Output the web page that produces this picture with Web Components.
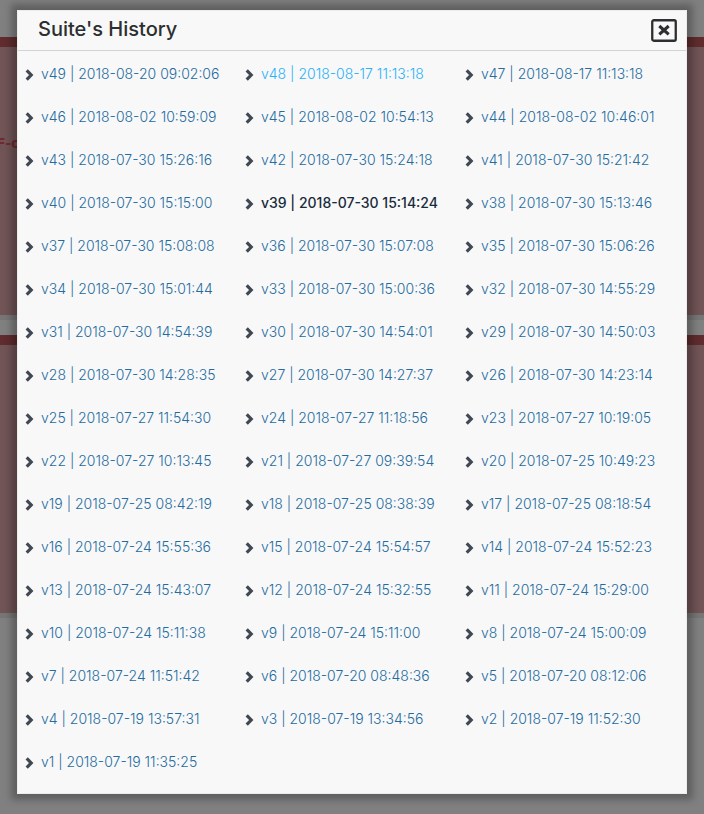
<!DOCTYPE html>
<html lang="en">
<head>
<meta charset="utf-8">
<title>Suite's History</title>
<style>
html { height: 100%; }
body { margin: 0; min-height: 100%; background: #808080; font-family: Inter, "Liberation Sans", sans-serif; }
</style>
</head>
<body>
<history-page></history-page>
<script>
class BackdropPanel extends HTMLElement {
  constructor() {
    super();
    this.attachShadow({ mode: 'open' }).innerHTML = `
      <style>
        :host { display: block; box-sizing: border-box; height: 283px; background: #705456;
          border-top: 10px solid #602c2e; border-bottom: 5px solid #767676; color: #6e2a2e;
          font: bold 14px/20px "DejaVu Sans", sans-serif; padding-top: 86px; text-indent: -4px; overflow: hidden; }
      </style><slot></slot>`;
  }
}
customElements.define('backdrop-panel', BackdropPanel);

class CloseButton extends HTMLElement {
  constructor() {
    super();
    this.attachShadow({ mode: 'open' }).innerHTML = `
      <style>
        :host { display: block; }
        button { display: block; padding: 0; border: 0; background: none; cursor: pointer; }
        svg { display: block; }
      </style>
      <button type="button" aria-label="Close">
        <svg width="26" height="24" viewBox="0 0 26 24" fill="none" stroke="#2d2e30">
          <rect x="1.25" y="1.25" width="23.5" height="20.5" rx="1.5" stroke-width="2.3"/>
          <path d="M8.3 7L17.7 15.4M17.7 7L8.3 15.4" stroke-width="3.1"/>
        </svg>
      </button>`;
  }
}
customElements.define('close-button', CloseButton);

class VersionItem extends HTMLElement {
  connectedCallback() {
    this.attachShadow({ mode: 'open' }).innerHTML = `
      <style>
        :host { display: flex; align-items: center; gap: 7px; height: 43px; color: #236ba0; font-size: 14px; font-weight: 300; white-space: nowrap; }
        :host([state="hover"]) { color: #27b1fa; }
        :host([state="current"]) { color: #182b3b; font-weight: 500; }
        svg { flex: none; margin-top: 2px; }
        a { color: inherit; text-decoration: none; }
      </style>
      <svg width="9" height="12" viewBox="0 0 9 12" fill="none" stroke="#3f4853" stroke-width="3.2" aria-hidden="true">
        <path d="M1.7 1.4L6.2 6L1.7 10.6"/>
      </svg>
      <a href="#version"><slot></slot></a>`;
  }
}
customElements.define('version-item', VersionItem);

class HistoryDialog extends HTMLElement {
  constructor() {
    super();
    this.attachShadow({ mode: 'open' }).innerHTML = `
      <style>
        :host { display: block; box-sizing: border-box; background: #f8f8f8; border: 1px solid #ececec;
          box-shadow: 0 0 7px 6px rgba(0,0,0,.26); }
        header { display: flex; align-items: center; justify-content: space-between; box-sizing: border-box;
          height: 40px; padding: 0 9px 0 20px; border-bottom: 1px solid #d2d3d4; }
        h2 { margin: 0; padding-bottom: 3px; font-size: 20px; line-height: 24px; font-weight: 500; color: #2c2e30; }
        .list { display: grid; grid-template-columns: repeat(3, 1fr); padding: 1px 1px 10px 7px; }
      </style>
      <header><h2 id="title"><slot name="title"></slot></h2><close-button></close-button></header>
      <div class="list" role="list"><slot></slot></div>`;
  }
}
customElements.define('history-dialog', HistoryDialog);

const versions = `v49 | 2018-08-20 09:02:06
v48 | 2018-08-17 11:13:18
v47 | 2018-08-17 11:13:18
v46 | 2018-08-02 10:59:09
v45 | 2018-08-02 10:54:13
v44 | 2018-08-02 10:46:01
v43 | 2018-07-30 15:26:16
v42 | 2018-07-30 15:24:18
v41 | 2018-07-30 15:21:42
v40 | 2018-07-30 15:15:00
v39 | 2018-07-30 15:14:24
v38 | 2018-07-30 15:13:46
v37 | 2018-07-30 15:08:08
v36 | 2018-07-30 15:07:08
v35 | 2018-07-30 15:06:26
v34 | 2018-07-30 15:01:44
v33 | 2018-07-30 15:00:36
v32 | 2018-07-30 14:55:29
v31 | 2018-07-30 14:54:39
v30 | 2018-07-30 14:54:01
v29 | 2018-07-30 14:50:03
v28 | 2018-07-30 14:28:35
v27 | 2018-07-30 14:27:37
v26 | 2018-07-30 14:23:14
v25 | 2018-07-27 11:54:30
v24 | 2018-07-27 11:18:56
v23 | 2018-07-27 10:19:05
v22 | 2018-07-27 10:13:45
v21 | 2018-07-27 09:39:54
v20 | 2018-07-25 10:49:23
v19 | 2018-07-25 08:42:19
v18 | 2018-07-25 08:38:39
v17 | 2018-07-25 08:18:54
v16 | 2018-07-24 15:55:36
v15 | 2018-07-24 15:54:57
v14 | 2018-07-24 15:52:23
v13 | 2018-07-24 15:43:07
v12 | 2018-07-24 15:32:55
v11 | 2018-07-24 15:29:00
v10 | 2018-07-24 15:11:38
v9 | 2018-07-24 15:11:00
v8 | 2018-07-24 15:00:09
v7 | 2018-07-24 11:51:42
v6 | 2018-07-20 08:48:36
v5 | 2018-07-20 08:12:06
v4 | 2018-07-19 13:57:31
v3 | 2018-07-19 13:34:56
v2 | 2018-07-19 11:52:30
v1 | 2018-07-19 11:35:25`.split('\n');

class HistoryPage extends HTMLElement {
  constructor() {
    super();
    const states = { v48: 'hover', v39: 'current' };
    const items = versions.map(text => {
      const state = states[text.split(' ')[0]];
      return `<version-item role="listitem"${state ? ` state="${state}"` : ''}>${text}</version-item>`;
    }).join('');
    this.attachShadow({ mode: 'open' }).innerHTML = `
      <style>
        :host { display: grid; }
        .behind, .front { grid-area: 1 / 1; min-width: 0; }
        .behind { display: flex; flex-direction: column; gap: 15px; padding-top: 37px; }
        .front { position: relative; padding: 10px 17px 20px; }
      </style>
      <div class="behind"><backdrop-panel>F-c</backdrop-panel><backdrop-panel></backdrop-panel></div>
      <div class="front">
        <history-dialog role="dialog" aria-label="Suite's History"><span slot="title">Suite's History</span>${items}</history-dialog>
      </div>`;
  }
}
customElements.define('history-page', HistoryPage);
</script>
</body>
</html>
